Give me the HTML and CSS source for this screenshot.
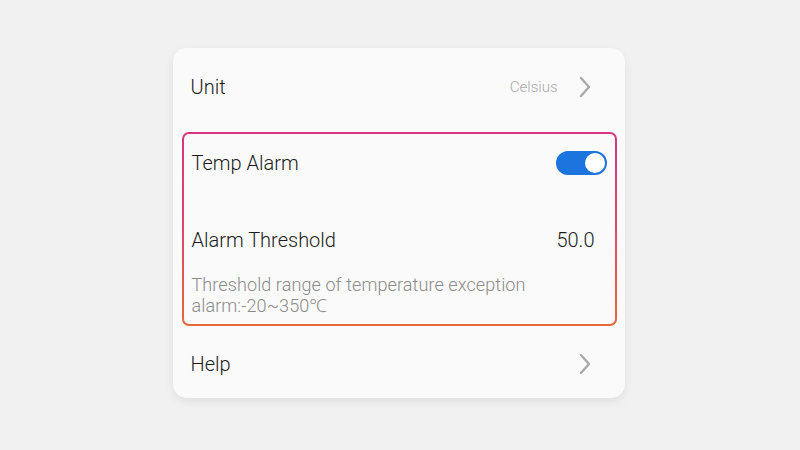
FILE: index.html
```html
<!DOCTYPE html>
<html lang="en">
<head>
<meta charset="utf-8">
<title>Temperature settings</title>
<link rel="stylesheet" href="styles.css">
</head>
<body>
<div class="card">
  <div class="row row-unit">
    <span class="label">Unit</span>
    <span class="trail">
      <span class="sub">Celsius</span>
      <svg class="chev" width="14" height="22" viewBox="0 0 14 22"><path d="M3 2 L11 11 L3 20" fill="none" stroke="#a9a9a9" stroke-width="2.4" stroke-linecap="round" stroke-linejoin="round"/></svg>
    </span>
  </div>
  <div class="alarm">
    <div class="row row-temp">
      <span class="label">Temp Alarm</span>
      <span class="toggle"><span class="knob"></span></span>
    </div>
    <div class="row row-threshold">
      <span class="label">Alarm Threshold</span>
      <span class="value">50.0</span>
    </div>
    <p class="desc">Threshold range of temperature exception alarm:-20~350℃</p>
  </div>
  <div class="row row-help">
    <span class="label">Help</span>
    <svg class="chev" width="14" height="22" viewBox="0 0 14 22"><path d="M3 2 L11 11 L3 20" fill="none" stroke="#a9a9a9" stroke-width="2.4" stroke-linecap="round" stroke-linejoin="round"/></svg>
  </div>
</div>
</body>
</html>
```
FILE: styles.css
```css
html, body {
  margin: 0;
  padding: 0;
}
body {
  width: 800px;
  height: 450px;
  background: #f1f1f1;
  font-family: Roboto, "Noto Sans", sans-serif;
  font-weight: 300;
  color: #222;
  display: flex;
  justify-content: center;
  align-items: flex-start;
}
.card {
  margin-top: 48px;
  margin-left: -3px;
  width: 452px;
  height: 350px;
  box-sizing: border-box;
  background: #fafafa;
  border-radius: 14px;
  box-shadow: 0 4px 10px rgba(0, 0, 0, 0.07);
  padding: 0 8px 0 9px;
  display: flex;
  flex-direction: column;
}
.card > * {
  flex-shrink: 0;
}
.row {
  display: flex;
  align-items: center;
  justify-content: space-between;
}
.label {
  font-size: 20px;
  font-weight: 300;
  color: #1a1a1a;
}
.row-unit {
  height: 78px;
  padding: 0 25px 0 9px;
  margin-bottom: 6px;
}
.trail {
  display: flex;
  align-items: center;
  gap: 20px;
}
.sub {
  font-size: 15px;
  color: #a8a8a8;
}
.chev {
  display: block;
}
.alarm {
  height: 194px;
  box-sizing: border-box;
  border: 2px solid transparent;
  border-radius: 7px;
  background:
    linear-gradient(#fafafa, #fafafa) padding-box,
    linear-gradient(to bottom, #d8347f, #e0466a 50%, #e8673a) border-box;
  padding: 0 8px 0 8px;
  display: flex;
  flex-direction: column;
}
.alarm > * {
  flex-shrink: 0;
}
.row-temp {
  height: 58px;
}
.toggle {
  width: 51px;
  height: 24px;
  border-radius: 12px;
  background: #1c74de;
  box-sizing: border-box;
  padding: 2px;
  display: flex;
  justify-content: flex-end;
}
.knob {
  width: 20px;
  height: 20px;
  border-radius: 50%;
  background: #fff;
}
.row-threshold {
  height: 56px;
  margin-top: 20px;
}
.value {
  font-size: 20px;
  font-weight: 300;
  color: #1a1a1a;
  margin-right: 12px;
}
.desc {
  margin: 6px 0 0 0;
  font-size: 18px;
  line-height: 21px;
  letter-spacing: 0.1px;
  color: #8a8a8a;
  width: 380px;
}
.row-help {
  height: 72px;
  box-sizing: border-box;
  padding: 4px 25px 0 9px;
}
```
